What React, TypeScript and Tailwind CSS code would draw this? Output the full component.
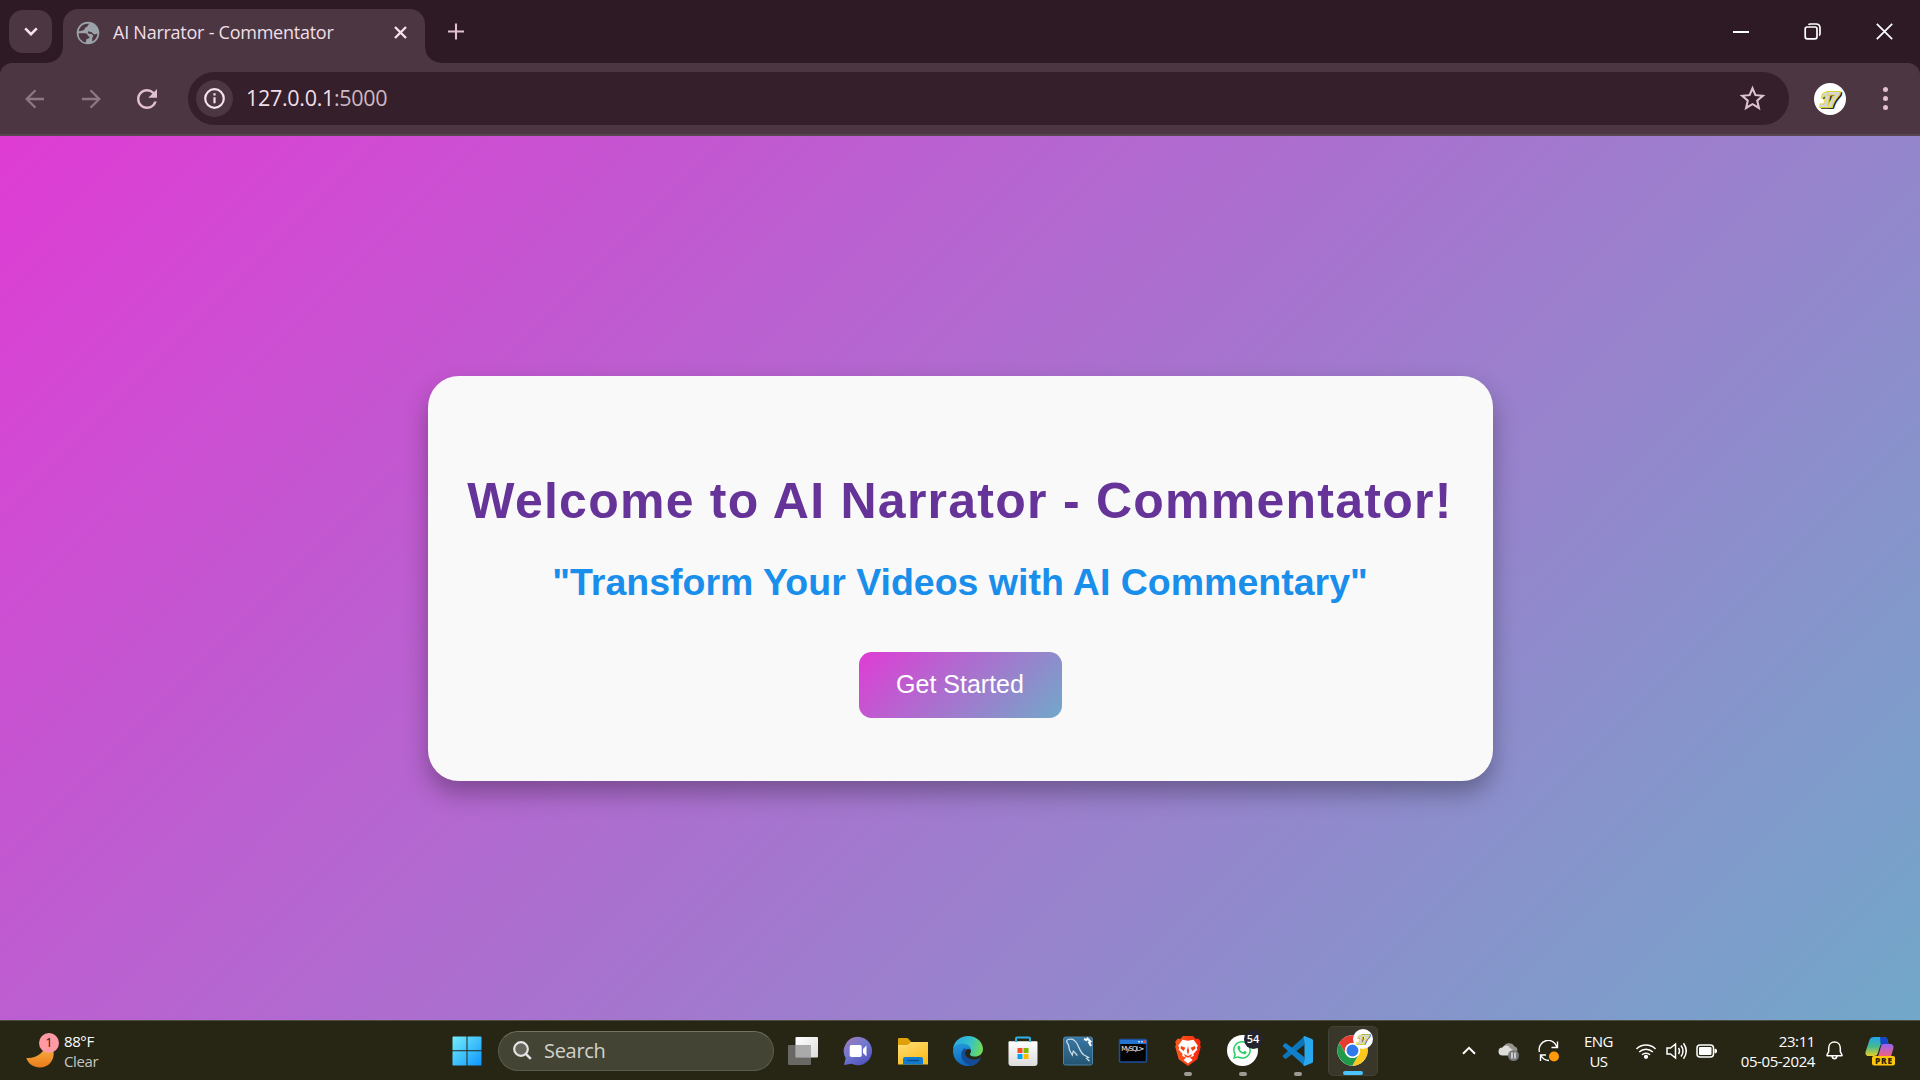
import React from "react";
import { SiBrave, SiWhatsapp } from "react-icons/si";
import { VscVscode } from "react-icons/vsc";
import { MdStarBorder, MdRefresh } from "react-icons/md";

const ui = "font-['Open_Sans','Noto_Sans',sans-serif]";

function Seventeen({ size, fs }: { size: number; fs: number }) {
  return (
    <svg width={size} height={size} viewBox="0 0 32 32">
      <circle cx="16" cy="16" r="16" fill="#fff" />
      <g fontFamily="Liberation Sans" fontWeight="700" fontStyle="italic" fontSize={fs} textAnchor="middle">
        <text x="17" y="24.5" fill="#1c1c24" stroke="#1c1c24" strokeWidth="1.6" textLength="19">17</text>
        <text x="15.6" y="23.8" fill="#d6d6da" stroke="#d9d629" strokeWidth="2" paintOrder="stroke" textLength="19">17</text>
      </g>
    </svg>
  );
}

function TabStrip() {
  return (
    <div className="flex h-[63px] items-end bg-[#2d1a25]">
      <div className="mb-[10px] ml-[9px] flex h-[43px] w-[43px] items-center justify-center rounded-[14px] bg-[#4b3641]">
        <svg width="14" height="9" viewBox="0 0 14 9" fill="none" stroke="#f4e3ec" strokeWidth="2.6"><path d="M1.2 1.4 7 7.2l5.8-5.8" /></svg>
      </div>
      <svg className="-mr-px ml-[-7px] h-[18px] w-[19px]" viewBox="0 0 19 18"><path d="M0 18Q18 17 18 0h1v18z" fill="#4b3641" /></svg>
      <div className="flex h-[54px] w-[362px] items-center rounded-t-[15px] bg-[#4b3641] pb-[7px]">
        <svg className="ml-[13px]" width="24" height="24" viewBox="0 0 24 24">
          <circle cx="12" cy="12" r="11.3" fill="#9ba2a9" />
          <path d="M13.6 3c-2.700.8-1 2.500-3.600 3.200-1.700.5-.8 2.300-2.400 2.900-1.400.6-2.500 1.100-4.800 1.200.3-3.800 4.500-8.800 10.800-7.300zM2.600 12.200h6.200c2.200 0 3 1 3 2.800 2.500.2 2 1.900.5 2.500l-2.200 1.100v2.700C6.200 21.200 2.600 17.500 2.600 12.200zM12.600 10.300c1.700 1 3.300.3 3.900 1.700.8 1.900 2.500 1.500 4.900.4-.1 3.500-2 6.500-5.500 8.200 1-1.700-.4-3.100.9-4.500 1.400-1.500-1-3.300-3.200-3.300-1.500 0-2.500-1.500-1-2.500z" fill="#4b3641" />
        </svg>
        <span className={`${ui} ml-[13px] w-[226px] whitespace-nowrap text-[18px] tracking-[-0.25px] text-[#f1dfe8]`}>AI Narrator - Commentator</span>
        <svg className="ml-[55px]" width="13" height="13" viewBox="0 0 13 13" stroke="#f4e3ec" strokeWidth="2.4"><path d="M1 1l11 11M12 1 1 12" /></svg>
      </div>
      <svg className="-ml-px h-[18px] w-[19px]" viewBox="0 0 19 18"><path d="M19 18Q1 17 1 0H0v18z" fill="#4b3641" /></svg>
      <svg className="mb-[23px] ml-[5px]" width="16" height="17" viewBox="0 0 16 17" stroke="#e2bfd1" strokeWidth="2.1"><path d="M0 8.500h16M8 .5v16" /></svg>
      <div className="flex flex-1 items-center justify-end pb-[23px] pr-[27px]">
        <div className="h-[2px] w-4 bg-white" />
        <svg className="ml-[55px]" width="17" height="17" viewBox="0 0 17 17" fill="none" stroke="#fff" strokeWidth="1.700"><rect x="1.200" y="4" width="11.800" height="11.800" rx="2" /><path d="M4.500 1.700Q5 1 6.500 1H12q4 0 4 4v5.500q0 1.600-1 2" /></svg>
        <svg className="ml-[55px]" width="17" height="17" viewBox="0 0 17 17" stroke="#fff" strokeWidth="1.700"><path d="M.8.8l15.400 15.400M16.200.8.8 16.200" /></svg>
      </div>
    </div>
  );
}

function Toolbar() {
  return (
    <div className="bg-[#2d1a25]">
      <div className="flex h-[73px] items-center rounded-t-[12px] border-b-2 border-[#57464f] bg-[#4b3641]">
        <svg className="ml-[25px]" width="20" height="20" viewBox="0 0 20 20" fill="none" stroke="#8d7882" strokeWidth="2.300"><path d="M19 10H2M10.500 1.200 1.700 10l8.800 8.800" /></svg>
        <svg className="ml-[36px]" width="20" height="20" viewBox="0 0 20 20" fill="none" stroke="#8d7882" strokeWidth="2.300"><path d="M1 10h17M9.500 1.200l8.800 8.800-8.800 8.800" /></svg>
        <MdRefresh className="ml-[31px] shrink-0 text-[#e2bfd1]" size={30} />
        <div className="ml-[26px] flex h-[53px] w-[1601px] items-center rounded-full bg-[#351f2a]">
          <div className="ml-2 flex h-[37px] w-[37px] items-center justify-center rounded-full bg-[#4b3641]">
            <svg width="21" height="21" viewBox="0 0 21 21" fill="none" stroke="#f4e3ec" strokeWidth="2.200"><circle cx="10.500" cy="10.500" r="9.300" /><path d="M10.500 9.200v6M10.500 5.200v2.200" /></svg>
          </div>
          <span className={`${ui} ml-[13px] text-[21.500px] tracking-[-0.3px] text-[#f1dfe8]`}>127.0.0.1<span className="text-[#cdb8c2]">:5000</span></span>
          <MdStarBorder className="ml-auto mr-[21px] text-[#dcc3cf]" size={31} />
        </div>
        <div className="ml-[25px]"><Seventeen size={32} fs={22} /></div>
        <div className="ml-[37px] flex flex-col gap-[4px]">
          <i className="h-[5px] w-[5px] rounded-full bg-[#e2bfd1]" /><i className="h-[5px] w-[5px] rounded-full bg-[#e2bfd1]" /><i className="h-[5px] w-[5px] rounded-full bg-[#e2bfd1]" />
        </div>
      </div>
    </div>
  );
}

function Page() {
  return (
    <main className="flex h-[884px] items-center justify-center bg-[linear-gradient(135deg,#df3cd4,#72a8c9)] font-['Liberation_Sans',Arial,sans-serif]">
      <section className="flex h-[405px] w-[1065px] flex-col items-center rounded-[31px] bg-[#f9f9f9] shadow-[0_12px_25px_rgba(0,0,0,0.3)]">
        <h1 className="mt-[96px] whitespace-nowrap text-[50px] font-bold leading-[58px] tracking-[1.25px] text-[#663399]">Welcome to AI Narrator - Commentator!</h1>
        <h2 className="mt-[31px] whitespace-nowrap text-[37.500px] font-bold leading-[43px] tracking-[0px] text-[#198eea]">"Transform Your Videos with AI Commentary"</h2>
        <button className="mt-[48px] h-[66px] w-[203px] rounded-[12.500px] bg-[linear-gradient(135deg,#df3cd4,#72a8c9)] text-[25px] text-white">Get Started</button>
      </section>
    </main>
  );
}

function WinLogo() {
  return (
    <svg width="30" height="30" viewBox="0 0 30 30">
      <defs><linearGradient id="win" x1="0" y1="0" x2="30" y2="30" gradientUnits="userSpaceOnUse"><stop stopColor="#78efff" /><stop offset="1" stopColor="#0a94fb" /></linearGradient></defs>
      <path fill="url(#win)" d="M1 .5h13.500v13.800H.5V1zM15.500.5H29l.5.500v13.300h-14zM.5 15.300h14v14.200H1l-.5-.5zM15.500 15.300h14V29l-.5.500H15.500z" />
    </svg>
  );
}

const TaskView = () => (
  <svg width="32" height="32" viewBox="0 0 32 32">
    <defs><linearGradient id="tv" x2="1" y2="1"><stop stopColor="#fff" /><stop offset="1" stopColor="#dcdcdc" /></linearGradient></defs>
    <rect x="8.500" y="2" width="22.500" height="20.500" rx="1" fill="url(#tv)" />
    <rect x="1" y="10" width="23" height="20" rx="1" fill="#777" fillOpacity=".82" />
    <path d="M8.500 10H24v12.500H8.500z" fill="#aaa" />
  </svg>
);
const Chat = () => (
  <svg width="32" height="32" viewBox="0 0 32 32">
    <defs><linearGradient id="ch" x1="0" x2=".7" y2="1"><stop stopColor="#a779b4" /><stop offset=".5" stopColor="#7279d0" /><stop offset="1" stopColor="#5053bf" /></linearGradient></defs>
    <path d="M16 1.800a14.200 14.200 0 1 1-6.500 26.900L2 30l1.700-6.900A14.200 14.200 0 0 1 16 1.800z" fill="url(#ch)" />
    <rect x="7.700" y="10" width="12" height="12" rx="1.800" fill="#fff" /><path d="M21 14l3.500-3.500v11L21 18z" fill="#fff" />
  </svg>
);
const Folder = () => (
  <svg width="32" height="32" viewBox="0 0 32 32">
    <defs><linearGradient id="fo" x2=".6" y2="1"><stop stopColor="#ffdf78" /><stop offset="1" stopColor="#fbbd1d" /></linearGradient></defs>
    <path d="M1 4q0-1 1-1h8.500l3.500 3.500V12H1z" fill="#e0a009" />
    <path d="M1 10h9.500L14 7h17v22.500H1z" fill="url(#fo)" />
    <path d="M6 29.500V24q0-2 2-2h16q2 0 2 2v5.500z" fill="#117bd0" /><path d="M10 25.500h12" stroke="#084d8c" strokeWidth="1.500" />
  </svg>
);
const Edge = () => (
  <svg width="32" height="32" viewBox="0 0 32 32">
    <defs>
      <linearGradient id="e1" x1="0" y1=".3" x2="1" y2=".5"><stop stopColor="#2ba6e2" /><stop offset=".55" stopColor="#35c1cb" /><stop offset="1" stopColor="#72db55" /></linearGradient>
      <linearGradient id="e2" x2=".3" y2="1"><stop stopColor="#249bdd" /><stop offset="1" stopColor="#0d65bc" /></linearGradient>
    </defs>
    <path d="M1 14C2 6 8.500 1 16 1c9 0 15 6.500 15 13 0 5-4 7.600-8 7.600-4 0-6-1.600-4.600-3.600 1.900-2.800-.4-6.500-4.400-7.300C8.500 9.600 3 12 1 14z" fill="url(#e1)" />
    <path d="M1 16C1 11 5.600 8.700 10.500 8.700c5.500 0 8.800 3.200 8.500 6.700-2-2.700-6-1.500-6 2.600 0 7 6 12 13 9.500C23.500 30 19.500 31 16 31 7 31 1 24 1 16z" fill="url(#e2)" />
    <path d="M12 13.500C9.500 16 9 19 9.600 22c1 4.700 5 8 10 8.500 4-.8 7-3.300 9-6.500.4-.7-.2-1-.8-.7-6 2.900-14.300.6-14.800-5.300-.1-2 .6-3.300 1.600-4.100z" fill="#134b95" />
  </svg>
);
const Store = () => (
  <svg width="32" height="32" viewBox="0 0 32 32">
    <defs><linearGradient id="st" x2="0" y2="1"><stop stopColor="#fff" /><stop offset="1" stopColor="#dcdcdc" /></linearGradient></defs>
    <path d="M1.500 7q0-.8 1-.8h27q1 0 1 .8v21q0 3-3 3h-23q-3 0-3-3z" fill="url(#st)" />
    <path d="M9 7V3.500Q9 2.500 10 2.500h12q1 0 1 1V7" fill="none" stroke="#2eb1e3" strokeWidth="2" />
    <path fill="#f25022" d="M10.500 13h5v5h-5z" /><path fill="#7fba00" d="M16.500 13h5v5h-5z" /><path fill="#00a4ef" d="M10.500 19h5v5h-5z" /><path fill="#ffb900" d="M16.500 19h5v5h-5z" />
  </svg>
);
const Workbench = () => (
  <svg width="32" height="32" viewBox="0 0 32 32">
    <defs><linearGradient id="wb" x2="0" y2="1"><stop stopColor="#3878a6" /><stop offset="1" stopColor="#245571" /></linearGradient></defs>
    <rect x="1.500" y="2" width="29" height="28" rx="2" fill="url(#wb)" stroke="#4a83a5" />
    <path d="M6 4.500c4-1.200 7.500 1 9.500 5 2 4 3 8 6.500 10.500l4.500 2.500-2 .8 3 3M6 4.500c-2 .6-1.500 2.500 0 4.500 1.500 1.900.5 4.500 2 7l2.300 4 1-4c2 1 2 3 4.200 4.500" fill="none" stroke="#c9dbe5" strokeWidth="1.300" />
    <path d="M22 4l2.500 1 1-1.500 3 3-1.500.8 2 3.700" fill="none" stroke="#fff" strokeWidth="2" />
  </svg>
);
const MySql = () => (
  <svg width="32" height="32" viewBox="0 0 32 32">
    <rect x="2.500" y="4.500" width="27" height="22.500" rx="1" fill="#030303" stroke="#1b4f9c" strokeWidth="1.500" />
    <path d="M3 5h26.500v4H3z" fill="#2473d0" /><path d="M21 6h2v1.500h-2zM24 6h2v1.500h-2z" fill="#b7d7ff" /><path d="M27 5.500h2v2.500h-2z" fill="#e5502a" />
    <text x="4.300" y="16.200" fill="#f1f1f1" fontFamily="DejaVu Sans" fontSize="6.800" textLength="23">MySQL&gt;</text>
  </svg>
);
const Brave = () => (
  <svg width="32" height="32" viewBox="0 0 32 32">
    <defs><linearGradient id="br" x2="1"><stop stopColor="#ff5a1b" /><stop offset="1" stopColor="#f5280c" /></linearGradient></defs>
    <path d="M11 1h10l2.700 3 2.600-.4 2.500 3.300-.8 2.300.8 2.600-3.500 12.500L16 31 6.700 24.300 3.200 11.800 4 9.200l-.8-2.300 2.500-3.300L8.300 4z" fill="url(#br)" />
    <path d="M16 5.800l5.500-1 4.300 5.700-1 2.200.6 1.800-4 4.500.4 2-4 1.500 2.700 2.500-4.500 3.500-4.500-3.500 2.700-2.500-4-1.500.4-2-4-4.500.6-1.800-1-2.200 4.300-5.700z" fill="#fff" />
    <path d="M9 11l4.500 1.700L11.500 16l-3-2.500zM23 11l-4.500 1.700 2 3.300 3-2.500zM16 11l1.200 5-1.200 4-1.200-4zM12 19l4 2 4-2-1 2.500-3 1.200-3-1.200z" fill="#f8421a" />
  </svg>
);
const Whats = () => (
  <div className="relative h-8 w-8">
    <div className="flex h-[31px] w-[31px] items-center justify-center rounded-full bg-white"><SiWhatsapp size={18} color="#27cf61" /></div>
    <div className={`${ui} absolute left-[17px] top-[-5px] flex h-[19px] w-[19px] items-center justify-center rounded-full bg-[#23242e] text-[11px] font-semibold text-white`}>54</div>
  </div>
);
const Code = () => (
  <svg width="32" height="32" viewBox="0 0 32 32">
    <path d="M22.500 1.200v8.600L4.500 23.500q-1 .7-1.800 0l-1.500-1.400q-.9-.9 0-1.800z" fill="#0d76ba" />
    <path d="M22.500 30.800v-8.600L4.500 8.500q-1-.7-1.800 0L1.200 9.900q-.9.900 0 1.800z" fill="#1180cc" />
    <path d="M22.500 1l7.500 3q1 .5 1 1.500v21q0 1-1 1.500l-7.500 3q-.8.200-1-.5l1-6.500V8l-1-6.500q.2-.7 1-.5z" fill="#28a8ee" />
  </svg>
);
const Chrome = () => (
  <div className="relative h-8 w-8">
    <svg width="31" height="31" viewBox="0 0 48 48">
      <circle cx="24" cy="24" r="23.500" fill="#fff" />
      <path d="M24 .5a23.500 23.500 0 0 1 20.350 11.750H24a11.750 11.750 0 0 0-10.180 17.630L3.650 12.250A23.500 23.500 0 0 1 24 .5z" fill="#e53b30" />
      <path d="M3.650 12.250 13.820 29.880A11.750 11.750 0 0 0 34.180 29.880L24 47.500A23.500 23.500 0 0 1 3.650 12.250z" fill="#219a49" />
      <path d="M44.350 12.250A23.500 23.500 0 0 1 24 47.500l10.180-17.620A11.750 11.750 0 0 0 24 12.250z" fill="#fdc81a" />
      <circle cx="24" cy="24" r="11.700" fill="#fff" /><circle cx="24" cy="24" r="9.200" fill="#2f79ec" />
    </svg>
    <div className="absolute left-[16px] top-[-6px]"><Seventeen size={20} fs={21} /></div>
  </div>
);

const apps = [
  { I: TaskView }, { I: Chat }, { I: Folder }, { I: Edge }, { I: Store }, { I: Workbench }, { I: MySql },
  { I: Brave, dot: true }, { I: Whats, dot: true }, { I: Code, dot: true }, { I: Chrome, active: true },
];

function Taskbar() {
  return (
    <footer className={`${ui} flex h-[60px] items-center border-t border-[#4d4c43] bg-[#272615] text-white`}>
      <div className="flex w-[452px] items-center">
        <div className="relative ml-[26px] h-10 w-8">
          <svg width="30" height="40" viewBox="0 0 30 40"><defs><linearGradient id="moon" x2="0" y2="1"><stop stopColor="#f7bd4b" /><stop offset="1" stopColor="#ec7b1c" /></linearGradient></defs><path d="M21 11C20 20 11 28 .3 27c2 6 7.500 9.500 13.500 9.500C22 36.500 29 30 27.500 20 26.500 15 24 12.500 21 11z" fill="url(#moon)" /></svg>
          <div className="absolute left-[13px] top-[2px] flex h-5 w-5 items-center justify-center rounded-full bg-[#ff99a4] text-[13px] text-[#27141a]">1</div>
        </div>
        <div className="ml-[6px] text-[15px] leading-5 tracking-[-0.4px]"><div>88°F</div><div className="text-[#c6c6c1]">Clear</div></div>
      </div>
      <WinLogo />
      <div className="ml-[16px] flex h-10 w-[276px] items-center rounded-full border border-[#5b5a4b] border-t-[#737263] bg-[#444434]">
        <svg className="ml-[14px]" width="19" height="19" viewBox="0 0 19 19" fill="none" stroke="#e4e4e4" strokeWidth="2.200"><circle cx="8" cy="8" r="6.800" fill="#66665d" /><path d="M12.800 12.800l5 5" strokeWidth="2.600" /></svg>
        <span className="ml-[12px] text-[20px] tracking-[-0.3px] text-[#d2d2cb]">Search</span>
      </div>
      <div className="ml-[1px] flex">
        {apps.map(({ I, dot, active }, i) => (
          <div key={i} className="flex w-[55px] justify-center">
            <div className={active ? "relative flex h-[50px] w-[50px] items-center justify-center rounded-[5px] border border-[#424133] bg-[#38372a]" : "relative flex h-[50px] w-[50px] items-center justify-center"}>
              <I />
              {dot && <i className="absolute bottom-0 left-[21px] h-1 w-2 rounded-full bg-[#9b9a92]" />}
              {active && <i className="absolute bottom-0 left-[14px] h-1 w-5 rounded-full bg-[#4cc2ff]" />}
            </div>
          </div>
        ))}
      </div>
      <div className="ml-auto flex items-center">
        <svg width="14" height="9" viewBox="0 0 14 9" fill="none" stroke="#fff" strokeWidth="2"><path d="M1 7.800l6-6 6 6" /></svg>
        <svg className="ml-[22px]" width="22" height="22" viewBox="0 0 22 22"><path d="M5.500 7a6 6 0 0 1 11-.5c2 .3 3 2 3 4L12 13z" fill="#96968f" /><path d="M4.500 15.500a4 4 0 0 1 0-8c1-2.500 6-3 7.300.5L17 11l-6 4.500z" fill="#deded9" /><circle cx="15.500" cy="15.500" r="5.500" fill="#777a7c" /><path d="M14 12.500v6M17 12.500v6" stroke="#fff" strokeWidth="1.200" /></svg>
        <svg className="ml-[18px]" width="22" height="22" viewBox="0 0 22 22" fill="none" stroke="#fff" strokeWidth="1.400"><path d="M1.500 12A9 9 0 0 1 19 7M19.500 1.500v6h-6M2.500 21v-6H8M3 15.500c2 4 5 5 8 5" /><circle cx="16" cy="16.500" r="5" fill="#ff9b0b" stroke="none" /></svg>
        <div className="ml-[23px] w-[31px] text-center text-[15px] leading-5 tracking-[-0.5px]"><div>ENG</div><div>US</div></div>
        <svg className="ml-[21px]" width="22" height="18" viewBox="0 0 22 18" fill="none" stroke="#fff" strokeWidth="1.500"><path d="M1.500 7a13.300 13.300 0 0 1 19 0M4.200 10a9.600 9.600 0 0 1 13.600 0M7 12.800a5.700 5.700 0 0 1 8 0" /><circle cx="11" cy="14.800" r="1.400" fill="#fff" /></svg>
        <svg className="ml-[9px]" width="21" height="18" viewBox="0 0 21 18" fill="none" stroke="#fff" strokeWidth="1.500"><path d="M1 6h3.500L9.500 2v14l-5-4H1zM12.500 6q2 3 0 6M15 3.500q4 5.500 0 11M17.500 1.300q5.500 7.700 0 15.400" /></svg>
        <svg className="ml-[9px]" width="21" height="14" viewBox="0 0 21 14"><rect x="1" y="1" width="16.500" height="12" rx="3" fill="none" stroke="#fff" strokeWidth="1.500" /><rect x="3" y="3" width="12.500" height="8" rx="1" fill="#fff" /><path d="M19 5l1.500.8v2.400L19 9z" fill="#fff" stroke="#fff" /></svg>
        <div className="ml-[20px] w-[78px] whitespace-nowrap text-right text-[15px] leading-5 tracking-[-0.4px]"><div>23:11</div><div>05-05-2024</div></div>
        <svg className="ml-[11px]" width="17" height="19" viewBox="0 0 17 19" fill="none" stroke="#fff" strokeWidth="1.500"><path d="M8.500 1C5 1 2.700 3.700 2.700 7v3.500L1 14q-.2.800.6.800h13.800q.8 0 .6-.8l-1.700-3.500V7c0-3.300-2.300-6-5.800-6zM6 15q.5 2.700 2.500 2.700T11 15" /></svg>
        <svg className="ml-[22px] mr-[25px]" width="30" height="30" viewBox="0 0 30 30">
          <defs><linearGradient id="c1" x2="0" y2="1"><stop stopColor="#20a6ed" /><stop offset=".5" stopColor="#46b890" /><stop offset="1" stopColor="#e6cf28" /></linearGradient><linearGradient id="c2" x2="0" y2="1"><stop stopColor="#9a63ef" /><stop offset="1" stopColor="#f2617d" /></linearGradient></defs>
          <path d="M9 1h10q2.500 0 3.500 3L23.500 8H18q-2.500 0-3.300 3l-2 6.500Q12 20 9 20H4q-4.500 0-3.300-4.500L4.500 4Q5.500 1 9 1z" fill="url(#c1)" />
          <path d="M15 1h4q2.500 0 3.500 3l1 4H18q-1.500 0-2.300 1z" fill="#1745c7" />
          <path d="M18 8h7q4.300 0 3.300 4.500L26 20.500H12.500q1-1 1.300-2.500l2-7Q16.500 8 18 8z" fill="url(#c2)" />
          <rect x="7" y="20" width="23" height="9.500" rx="2" fill="#ffc60c" /><text x="10" y="27.600" fill="#2b2409" fontFamily="Open Sans" fontWeight="800" fontSize="8.300" textLength="17">PRE</text>
        </svg>
      </div>
    </footer>
  );
}

export default function App() {
  return (
    <div className="h-[1080px] w-[1920px] overflow-hidden">
      <TabStrip />
      <Toolbar />
      <Page />
      <Taskbar />
    </div>
  );
}
